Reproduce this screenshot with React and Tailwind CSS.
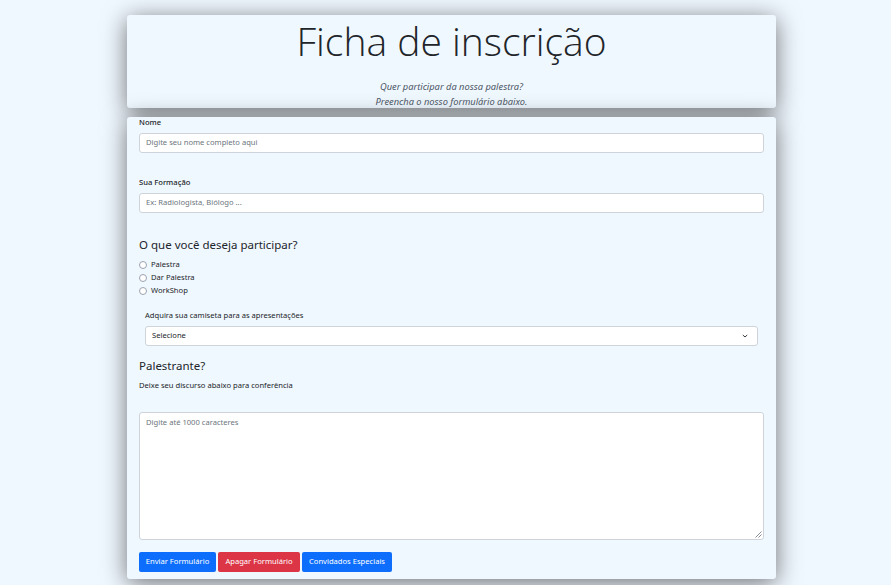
import React from 'react';

const font = { fontFamily: '"Noto Sans", "Open Sans", sans-serif' };

function Label({ children, className = '' }) {
  return (
    <div className={`h-[10px] leading-[10px] text-[7.6px] font-medium text-[#212529] ${className}`}>
      {children}
    </div>
  );
}

function Radio({ label }) {
  return (
    <label className="flex items-center h-[13px] gap-[4px] text-[7.6px] text-[#212529]">
      <span className="w-[8px] h-[8px] rounded-full border border-[#9ca3af] bg-white" />
      {label}
    </label>
  );
}

export default function App() {
  return (
    <div className="min-h-screen bg-[#f0f8ff] pt-[15px]" style={font}>
      {/* Header */}
      <div className="ml-[127px] w-[649px] h-[93px] rounded-[3px] bg-[#f0f8ff] text-center shadow-[0_4px_24px_rgba(0,0,0,0.55)]">
        <h1 className="pt-[1px] text-[39px] leading-[50px] font-light text-[#212529]" style={{ fontFamily: '"Open Sans", sans-serif' }}>
          Ficha de inscrição
        </h1>
        <div className="mt-[13px] text-[9.3px] italic leading-[15px] text-[#4b5563]">
          <p>Quer participar da nossa palestra?</p>
          <p>Preencha o nosso formulário abaixo.</p>
        </div>
      </div>

      {/* Form */}
      <div className="ml-[127px] mt-[9px] w-[649px] h-[462px] rounded-[3px] bg-[#f0f8ff] px-[12px] shadow-[0_4px_24px_rgba(0,0,0,0.55)]">
        <Label>Nome</Label>
        <div className="mt-[6px] h-[20px] rounded-[3px] border border-[#ced4da] bg-white px-[6px] flex items-center text-[7.6px] text-[#6c757d]">
          Digite seu nome completo aqui
        </div>

        <Label className="mt-[24px]">Sua Formação</Label>
        <div className="mt-[6px] h-[20px] rounded-[3px] border border-[#ced4da] bg-white px-[6px] flex items-center text-[7.6px] text-[#6c757d]">
          Ex: Radiologista, Biólogo ...
        </div>

        <h2 className="mt-[23px] h-[18px] leading-[18px] text-[11.5px] text-[#212529]">O que você deseja participar?</h2>
        <div className="mt-[4px] flex flex-col">
          <Radio label="Palestra" />
          <Radio label="Dar Palestra" />
          <Radio label="WorkShop" />
        </div>

        <div className="mx-[6px]">
          <div className="mt-[13px] h-[10px] leading-[10px] text-[7.6px] text-[#212529]">Adquira sua camiseta para as apresentações</div>
          <div className="mt-[6px] h-[20px] rounded-[3px] border border-[#ced4da] bg-white pl-[6px] pr-[8px] flex items-center justify-between text-[7.6px] text-[#212529]">
            <span>Selecione</span>
            <svg width="8" height="6" viewBox="0 0 8 6" fill="none" stroke="#343a40" strokeWidth="1">
              <path d="M1.8 2 L4 4 L6.2 2" />
            </svg>
          </div>
        </div>

        <h2 className="mt-[11px] h-[18px] leading-[18px] text-[11.5px] text-[#212529]">Palestrante?</h2>
        <div className="mt-[5px] h-[10px] leading-[10px] text-[7.6px] text-[#212529]">Deixe seu discurso abaixo para conferência</div>

        <div className="relative mt-[22px] h-[128px] rounded-[3px] border border-[#ced4da] bg-white px-[6px] pt-[4px] text-[7.6px] text-[#6c757d]">
          Digite até 1000 caracteres
          <svg className="absolute right-[1px] bottom-[1px]" width="7" height="7" viewBox="0 0 7 7" stroke="#6b7280" strokeWidth="0.8">
            <path d="M0.5 6.5 L6.5 0.5 M3.5 6.5 L6.5 3.5" />
          </svg>
        </div>

        <div className="mt-[12px] flex gap-[2px]">
          <button className="h-[20px] w-[77px] rounded-[2px] bg-[#0d6efd] text-[7.6px] text-white">Enviar Formulário</button>
          <button className="h-[20px] w-[82px] rounded-[2px] bg-[#dc3545] text-[7.6px] text-white">Apagar Formulário</button>
          <button className="h-[20px] w-[90px] rounded-[2px] bg-[#0d6efd] text-[7.6px] text-white">Convidados Especiais</button>
        </div>
      </div>
    </div>
  );
}
